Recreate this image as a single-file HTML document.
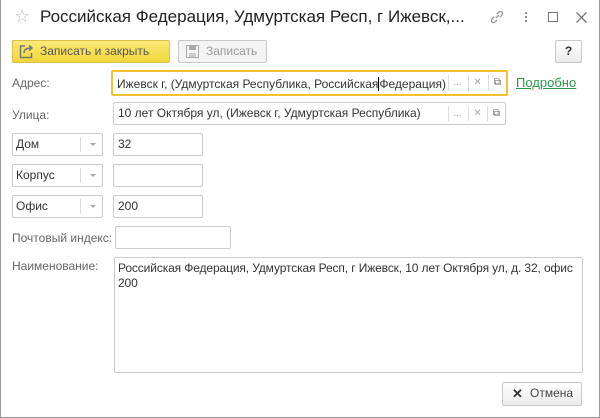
<!DOCTYPE html>
<html><head><meta charset="utf-8"><style>
*{box-sizing:border-box}
body{margin:0;width:600px;height:418px;background:#fff;font-family:"Liberation Sans",sans-serif;font-size:12px;color:#333;position:relative;overflow:hidden}
.win{position:absolute;left:0;top:0;width:600px;height:418px;border:1px solid #9a9a9a;border-top:none}
.a{position:absolute}
.title{left:40px;top:7px;font-size:17px;color:#222;white-space:nowrap}
.btn{position:absolute;border:1px solid #c8c8c8;border-radius:2px;background:linear-gradient(#fff,#ececec);height:23px;line-height:21px;color:#444;font-size:12px}
.inp{position:absolute;border:1px solid #ccc;border-radius:2px;background:#fff;height:23px;line-height:21px;padding-left:4px;color:#333;white-space:nowrap;overflow:hidden}
.lbl{position:absolute;color:#666}
.sel{position:absolute;border:1px solid #ccc;border-radius:2px;background:#fff;height:23px;line-height:21px;padding-left:3px;width:91px;color:#333}
.sel:after{content:"";position:absolute;left:67px;top:3px;bottom:3px;border-left:1px solid #ddd}
.sel span{position:absolute;left:77px;top:9px;border:3px solid transparent;border-top:3px solid #aaa}
.sb{position:absolute;top:3px;bottom:3px;width:18px;border-left:1px solid #ddd;text-align:center;color:#aaa;font-size:10px;line-height:16px}
</style></head><body>
<div class="win"></div>
<div class="a" style="left:14px;top:6px;font-size:18px;color:#bbb">☆</div>
<div class="a title">Российская Федерация, Удмуртская Респ, г Ижевск,...</div>
<svg class="a" style="left:489px;top:9px" width="16" height="16" viewBox="0 0 16 16" fill="none" stroke="#999" stroke-width="1.3"><path d="M7 9l3-3M5 8l-2 2a2.1 2.1 0 003 3l2-2M11 8l2-2a2.1 2.1 0 00-3-3L8 5"/></svg>
<div class="a" style="left:525px;top:11px;width:2px;height:12px;background:radial-gradient(circle,#888 1px,transparent 1.2px) 0 0/2px 4px"></div>
<div class="a" style="left:548px;top:12px;width:10px;height:10px;border:1.3px solid #777"></div>
<svg class="a" style="left:576px;top:12px" width="11" height="11" viewBox="0 0 11 11" stroke="#777" stroke-width="1.3"><path d="M0.5 0.5l10 10M10.5 0.5l-10 10"/></svg>

<div class="btn" style="left:12px;top:40px;width:158px;background:linear-gradient(#fbe978,#f2d73a);border-color:#d9c04a;color:#555;padding-left:27px">Записать и закрыть
<svg class="a" style="left:6px;top:3px" width="16" height="15" viewBox="0 0 16 15" fill="none" stroke="#777" stroke-width="1.5"><path d="M6 2H1.5v11.5h11V9"/><path d="M5 9c0-4 3-5 7-5M10 1.5l3 2.5-3 2.5"/></svg></div>
<div class="btn" style="left:178px;top:40px;width:89px;color:#999;padding-left:27px;background:#f4f4f4">Записать
<svg class="a" style="left:7px;top:4px" width="13" height="13" viewBox="0 0 13 13"><rect x="0.5" y="0.5" width="12" height="12" fill="none" stroke="#aaa"/><rect x="3" y="1" width="7" height="4" fill="#aaa"/><rect x="3" y="8" width="7" height="4" fill="#ccc"/></svg></div>
<div class="btn" style="left:555px;top:40px;width:27px;text-align:center;font-weight:bold;color:#333">?</div>

<div class="lbl" style="left:12px;top:76px">Адрес:</div>
<div class="inp" style="left:111px;top:70px;width:397px;height:26px;line-height:24px;border:2px solid #f5c12e">Ижевск г, (Удмуртская Республика, Российская<span style="border-left:1px solid #000"></span>Федерация)
<div class="sb" style="left:335px">...</div><div class="sb" style="left:355px">✕</div><div class="sb" style="left:375px;color:#666">⧉</div></div>
<div class="a" style="left:516px;top:75px;color:#2a9a4a;font-size:13px;text-decoration:underline">Подробно</div>

<div class="lbl" style="left:12px;top:108px">Улица:</div>
<div class="inp" style="left:113px;top:102px;width:393px">10 лет Октября ул, (Ижевск г, Удмуртская Республика)
<div class="sb" style="left:334px">...</div><div class="sb" style="left:354px">✕</div><div class="sb" style="left:373px;color:#666">⧉</div></div>

<div class="sel" style="left:12px;top:133px">Дом<span></span></div>
<div class="inp" style="left:113px;top:133px;width:90px">32</div>
<div class="sel" style="left:12px;top:164px">Корпус<span></span></div>
<div class="inp" style="left:113px;top:164px;width:90px"></div>
<div class="sel" style="left:12px;top:195px">Офис<span></span></div>
<div class="inp" style="left:113px;top:195px;width:90px">200</div>

<div class="lbl" style="left:12px;top:231px">Почтовый индекс:</div>
<div class="inp" style="left:115px;top:226px;width:116px"></div>

<div class="lbl" style="left:12px;top:259px">Наименование:</div>
<div class="inp" style="left:114px;top:257px;width:469px;height:116px;white-space:normal;line-height:15px;padding:3px 2px 3px 3px;letter-spacing:-0.12px">Российская Федерация, Удмуртская Респ, г Ижевск, 10 лет Октября ул, д. 32, офис 200</div>

<div class="btn" style="left:502px;top:382px;width:80px;height:24px;padding-left:27px;color:#444">Отмена
<span class="a" style="left:9px;top:0;font-weight:bold;font-size:13px;color:#333">✕</span></div>
</body></html>
